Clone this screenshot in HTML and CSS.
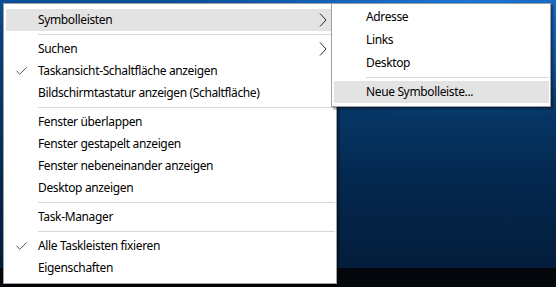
FILE: index.html
```html
<!DOCTYPE html>
<html lang="de">
<head>
<meta charset="utf-8">
<link rel="stylesheet" href="styles.css">
</head>
<body>
<div class="desktop">
  <div class="taskbar"></div>

  <div class="menu main">
    <div class="item hl"><span class="mark"></span><span class="label">Symbolleisten</span><svg class="chev" width="8" height="14" viewBox="0 0 8 14"><path d="M1 0.5 L7 7 L1 13.5" fill="none" stroke="#2b2b2b" stroke-width="1"/></svg></div>
    <div class="sep"></div>
    <div class="item"><span class="mark"></span><span class="label">Suchen</span><svg class="chev" width="8" height="14" viewBox="0 0 8 14"><path d="M1 0.5 L7 7 L1 13.5" fill="none" stroke="#2b2b2b" stroke-width="1"/></svg></div>
    <div class="item"><span class="mark"><svg width="11" height="8" viewBox="0 0 11 8"><path d="M0.5 4 L3.8 7.2 L10.5 0.5" fill="none" stroke="#4a5a70" stroke-width="1"/></svg></span><span class="label">Taskansicht-Schaltfläche anzeigen</span></div>
    <div class="item"><span class="mark"></span><span class="label">Bildschirmtastatur anzeigen (Schaltfläche)</span></div>
    <div class="sep"></div>
    <div class="item"><span class="mark"></span><span class="label">Fenster überlappen</span></div>
    <div class="item"><span class="mark"></span><span class="label">Fenster gestapelt anzeigen</span></div>
    <div class="item"><span class="mark"></span><span class="label">Fenster nebeneinander anzeigen</span></div>
    <div class="item"><span class="mark"></span><span class="label">Desktop anzeigen</span></div>
    <div class="sep"></div>
    <div class="item"><span class="mark"></span><span class="label">Task-Manager</span></div>
    <div class="sep"></div>
    <div class="item"><span class="mark"><svg width="11" height="8" viewBox="0 0 11 8"><path d="M0.5 4 L3.8 7.2 L10.5 0.5" fill="none" stroke="#4a5a70" stroke-width="1"/></svg></span><span class="label">Alle Taskleisten fixieren</span></div>
    <div class="item"><span class="mark"></span><span class="label">Eigenschaften</span></div>
  </div>

  <div class="menu sub">
    <div class="item tall"><span class="mark"></span><span class="label">Adresse</span></div>
    <div class="item tall"><span class="mark"></span><span class="label">Links</span></div>
    <div class="item tall"><span class="mark"></span><span class="label">Desktop</span></div>
    <div class="sep"></div>
    <div class="item hl"><span class="mark"></span><span class="label">Neue Symbolleiste...</span></div>
  </div>
</div>
</body>
</html>
```

FILE: styles.css
```css
* { box-sizing: border-box; }
html, body { margin: 0; padding: 0; }
body {
  width: 556px;
  height: 287px;
  overflow: hidden;
  font-family: "Noto Sans", "DejaVu Sans", sans-serif;
  font-size: 12px;
  letter-spacing: -0.36px;
  color: #000;
}
.desktop {
  position: relative;
  width: 556px;
  height: 287px;
  background:
    radial-gradient(ellipse 300px 120px at 470px 0px, rgba(30,120,220,0.9), rgba(30,120,220,0) 100%),
    linear-gradient(to bottom, #0a4f98 0px, #08427f 30px, #063666 110px, #04284f 180px, #031d3b 268px);
  display: flex;
  flex-direction: column;
  justify-content: flex-end;
}
.taskbar {
  height: 19px;
  background: #04070c;
}
.menu {
  position: absolute;
  background: #fff;
  border: 1px solid #a0a0a0;
  box-shadow: 2px 2px 2px rgba(0,0,0,0.45);
  display: flex;
  flex-direction: column;
}
.main {
  left: 3px;
  top: 3px;
  width: 334px;
  height: 281px;
  padding: 5px 4px 4px 2px;
}
.sub {
  left: 331px;
  top: 3px;
  width: 220px;
  height: 104px;
  padding: 1px 1px 2px 2px;
  z-index: 2;
}
.item {
  display: flex;
  align-items: center;
  height: 22px;
  flex: none;
  white-space: nowrap;
}
.item.tall { height: 23px; }
.item.hl { background: #e3e3e3; }
.mark {
  width: 32px;
  flex: none;
  display: flex;
  align-items: center;
  padding-left: 10px;
}
.mark svg { display: block; }
.label {
  flex: 1;
  line-height: 16px;
}
.chev {
  display: block;
  flex: none;
  margin-right: 5px;
}
.sep {
  flex: none;
  height: 7px;
  position: relative;
  margin-left: 32px;
  margin-right: -3px;
}
.sep::after {
  content: "";
  position: absolute;
  left: 0;
  right: 0;
  top: 3px;
  height: 1px;
  background: #d7d7d7;
}
.sub .sep { margin-right: 0; }
```
